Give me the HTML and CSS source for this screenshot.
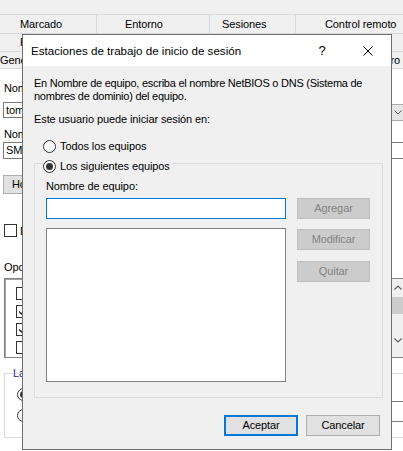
FILE: index.html
```html
<!DOCTYPE html>
<html lang="es">
<head>
<meta charset="utf-8">
<title>Estaciones de trabajo de inicio de sesión</title>
<link rel="stylesheet" href="styles.css">
</head>
<body>
<div class="window">
  <div class="strip"></div>
  <div class="tabrow row1">
    <div class="tab t1">Marcado</div>
    <div class="tab t2">Entorno</div>
    <div class="tab t3">Sesiones</div>
    <div class="tab t4">Control remoto</div>
  </div>
  <div class="tabrow row2">
    <div class="tab r2a">Perfil de Servicios de Escritorio remoto</div>
    <div class="tab r2b">COM+</div>
  </div>
  <div class="tabrow row3">
    <div class="tab r3a">General</div>
    <div class="tab r3b">Miembro de</div>
  </div>
  <div class="page">
    <div class="lbl l1">Nombre de inicio de sesión de usuario:</div>
    <div class="fieldrow f1">
      <div class="textbox tb1">tomas.garcia</div>
      <div class="combo">
        <span class="combo-text">@contoso.local</span>
        <span class="combo-arrow"><svg width="8" height="5" viewBox="0 0 8 5"><path d="M0.5 0.5L4 4L7.5 0.5" fill="none" stroke="#5a5a5a" stroke-width="1"/></svg></span>
      </div>
    </div>
    <div class="lbl l2">Nombre de inicio de sesión de usuario (anterior a Windows 2000):</div>
    <div class="fieldrow f2">
      <div class="textbox tb2">SMB\</div>
      <div class="textbox tb3">tomas.garcia</div>
    </div>
    <div class="btnrow">
      <div class="wbtn">Horario de inicio de sesión...</div>
      <div class="wbtn">Iniciar sesión en...</div>
    </div>
    <div class="chkrow"><span class="chk"></span><span class="chk-label">Desbloquear cuenta</span></div>
    <div class="lbl l3">Opciones de cuenta:</div>
    <div class="optlist">
      <div class="opts">
        <div class="opt"><span class="chk"></span>El usuario debe cambiar la contraseña en el siguiente inicio</div>
        <div class="opt"><span class="chk on"><svg width="9" height="9" viewBox="0 0 9 9"><path d="M1 4.5L3.5 7L8 1.5" fill="none" stroke="#222" stroke-width="1.3"/></svg></span>El usuario no puede cambiar la contraseña</div>
        <div class="opt"><span class="chk on"><svg width="9" height="9" viewBox="0 0 9 9"><path d="M1 4.5L3.5 7L8 1.5" fill="none" stroke="#222" stroke-width="1.3"/></svg></span>La contraseña nunca expira</div>
        <div class="opt"><span class="chk"></span>Almacenar contraseña con cifrado reversible</div>
      </div>
      <div class="scroll">
        <div class="sbtn"><svg width="8" height="5" viewBox="0 0 8 5"><path d="M0.5 4.5L4 1L7.5 4.5" fill="none" stroke="#606060" stroke-width="1.2"/></svg></div>
        <div class="thumb"></div>
        <div class="sfill"></div>
        <div class="sbtn sdown"><svg width="8" height="5" viewBox="0 0 8 5"><path d="M0.5 0.5L4 4L7.5 0.5" fill="none" stroke="#606060" stroke-width="1.2"/></svg></div>
      </div>
    </div>
    <div class="expire">
      <div class="cap">La cuenta expira</div>
      <div class="erow"><span class="radio on"></span>Nunca</div>
      <div class="erow"><span class="radio"></span>Fin de:<div class="date">martes, 12 de marzo de 2024</div></div>
    </div>
  </div>
</div>

<div class="dlg">
  <div class="titlebar">
    <div class="title">Estaciones de trabajo de inicio de sesión</div>
    <div class="tbtn help">?</div>
    <div class="tbtn close"><svg width="10" height="10" viewBox="0 0 10 10"><path d="M0.5 0.5L9.5 9.5M9.5 0.5L0.5 9.5" fill="none" stroke="#000" stroke-width="1"/></svg></div>
  </div>
  <div class="body">
    <p class="intro">En Nombre de equipo, escriba el nombre NetBIOS o DNS (Sistema de<br>nombres de dominio) del equipo.</p>
    <p class="prompt">Este usuario puede iniciar sesión en:</p>
    <div class="radio-row"><span class="radio"></span>Todos los equipos</div>
    <div class="group">
      <div class="legend"><span class="radio on"></span>Los siguientes equipos</div>
      <div class="gbody">
        <div class="gleft">
          <div class="glabel">Nombre de equipo:</div>
          <div class="gin"></div>
          <div class="glist"></div>
        </div>
        <div class="gright">
          <div class="dbtn b1">Agregar</div>
          <div class="dbtn b2">Modificar</div>
          <div class="dbtn b3">Quitar</div>
        </div>
      </div>
    </div>
    <div class="footer">
      <div class="fbtn ok">Aceptar</div>
      <div class="fbtn cancel">Cancelar</div>
    </div>
  </div>
</div>
</body>
</html>
```

FILE: styles.css
```css
* { box-sizing: border-box; }
html, body { margin: 0; padding: 0; }
body {
  width: 403px;
  height: 451px;
  overflow: hidden;
  position: relative;
  background: #f0f0f0;
  font-family: "Liberation Sans", Arial, sans-serif;
  font-size: 11px;
  letter-spacing: -0.1px;
  color: #000;
}

/* background property sheet */
.window { width: 403px; }
.strip { height: 14px; }
.tabrow {
  display: flex;
  border-top: 1px solid #d9d9d9;
  white-space: nowrap;
  overflow: hidden;
}
.row1 { height: 19px; line-height: 18px; }
.row2 { height: 18px; line-height: 17px; }
.row3 { height: 17px; line-height: 16px; }
.tab { flex: none; }
.t1 { width: 97px; padding-left: 20px; border-right: 1px solid #d9d9d9; }
.t2 { width: 113px; padding-left: 28px; border-right: 1px solid #d9d9d9; }
.t3 { width: 86px; padding-left: 12px; border-right: 1px solid #d9d9d9; }
.t4 { flex: 1; padding-left: 29px; }
.r2a { width: 283px; padding-left: 20px; border-right: 1px solid #d9d9d9; }
.r2b { padding-left: 20px; }
.r3a { width: 358px; }
.r3b { padding-left: 0; }

.page {
  width: 407px;
  height: 400px;
  background: #fff;
  border-top: 1px solid #d9d9d9;
  padding-left: 3px;
  white-space: nowrap;
}
.lbl { line-height: 13px; padding-left: 1px; overflow: hidden; }
.l1 { margin-top: 13px; }
.l2 { margin-top: 7px; }
.l3 { margin-top: 24px; }
.fieldrow { display: flex; align-items: flex-start; }
.f1 { margin-top: 7px; }
.f2 { margin-top: 1px; }
.textbox {
  border: 1px solid #7a7a7a;
  background: #fff;
  line-height: 14px;
  padding-left: 2px;
  overflow: hidden;
}
.tb1 { width: 150px; height: 16px; }
.tb2 { width: 150px; height: 17px; line-height: 15px; }
.tb3 { flex: 1; margin-left: 8px; height: 17px; line-height: 15px; }
.combo {
  flex: 1;
  margin-left: 8px;
  margin-top: 2px;
  height: 17px;
  background: #e5e5e5;
  border: 1px solid #acacac;
  display: flex;
  justify-content: space-between;
  line-height: 15px;
}
.combo-text { padding-left: 3px; }
.combo-arrow {
  width: 17px;
  display: flex;
  align-items: center;
  justify-content: center;
}
.btnrow { display: flex; gap: 8px; margin-top: 16px; }
.wbtn {
  height: 19px;
  line-height: 17px;
  background: #e1e1e1;
  border: 1px solid #adadad;
  padding: 0 8px;
}
.chkrow {
  display: flex;
  align-items: center;
  margin-top: 30px;
  height: 13px;
  padding-left: 1px;
}
.chk {
  width: 13px;
  height: 13px;
  border: 1px solid #333;
  background: #fff;
  flex: none;
  display: flex;
  align-items: center;
  justify-content: center;
}
.chk-label { margin-left: 3px; }
.optlist {
  margin-top: 4px;
  margin-left: 1px;
  height: 80px;
  border: 1px solid #828282;
  box-shadow: inset 1px 1px 0 #a0a0a0;
  background: #fff;
  display: flex;
}
.opts { flex: 1; padding: 5px 0 0 11px; overflow: hidden; }
.opt { display: flex; align-items: center; height: 18px; gap: 4px; }
.scroll {
  width: 17px;
  background: #f0f0f0;
  display: flex;
  flex-direction: column;
}
.sbtn { height: 17px; display: flex; align-items: center; justify-content: center; }
.thumb { height: 17px; margin: 1px 0 0 1px; background: #cdcdcd; }
.sfill { flex: 1; }
.sdown { margin-bottom: 8px; }
.expire {
  margin-top: 15px;
  margin-left: 1px;
  height: 65px;
  border: 1px solid #dcdcdc;
}
.cap {
  display: block;
  width: max-content;
  margin: -7px 0 0 8px;
  padding-right: 2px;
  line-height: 13px;
  background: #fff;
  color: #1b2a8c;
}
.erow {
  display: flex;
  align-items: center;
  height: 13px;
  margin-top: 8px;
  padding-left: 12px;
}
.date {
  margin-left: auto;
  width: 220px;
  height: 21px;
  margin-top: -8px;
  border: 1px solid #7a7a7a;
  background: #fff;
  line-height: 19px;
  padding-left: 3px;
}

.radio {
  width: 13px;
  height: 13px;
  border: 1px solid #333;
  border-radius: 50%;
  background: #fff;
  flex: none;
  margin-right: 4px;
  display: flex;
  align-items: center;
  justify-content: center;
}
.radio.on::after {
  content: "";
  width: 7px;
  height: 7px;
  border-radius: 50%;
  background: #333;
}

/* dialog */
.dlg {
  position: absolute;
  left: 22px;
  top: 34px;
  width: 370px;
  height: 416px;
  border: 1px solid #6f6f6f;
  background: #f0f0f0;
  display: flex;
  flex-direction: column;
}
.titlebar {
  height: 31px;
  background: #fff;
  display: flex;
  align-items: center;
  flex: none;
}
.title {
  flex: 1;
  padding-left: 8px;
  white-space: nowrap;
  font-size: 11.6px;
  letter-spacing: 0;
}
.tbtn {
  width: 46px;
  height: 31px;
  display: flex;
  align-items: center;
  justify-content: center;
}
.help { font-size: 13px; letter-spacing: 0; }
.body {
  flex: 1;
  padding: 11px 8px 0 11px;
}
.intro, .prompt { margin: 0; line-height: 13px; white-space: nowrap; }
.intro { letter-spacing: -0.25px; }
.prompt { margin-top: 10px; }
.radio-row {
  display: flex;
  align-items: center;
  height: 16px;
  margin-top: 12px;
  padding-left: 9px;
}
.group {
  margin-top: 9px;
  border: 1px solid #dcdcdc;
  padding: 0 11px 15px 11px;
}
.legend {
  display: flex;
  align-items: center;
  width: max-content;
  height: 16px;
  margin: -6px 0 0 -3px;
  padding-right: 2px;
  background: #f0f0f0;
}
.gbody { display: flex; gap: 11px; margin-top: 6px; }
.gleft { width: 240px; display: flex; flex-direction: column; }
.glabel { line-height: 13px; }
.gin { height: 21px; margin-top: 5px; border: 1px solid #0078d7; background: #fff; }
.glist { height: 154px; margin-top: 9px; border: 1px solid #828282; background: #fff; }
.gright { width: 73px; display: flex; flex-direction: column; padding-top: 18px; }
.dbtn {
  height: 21px;
  background: #cccccc;
  border: 1px solid #bfbfbf;
  color: #838383;
  text-align: center;
  line-height: 19px;
}
.b2 { margin-top: 10px; }
.b3 { margin-top: 11px; }
.footer {
  display: flex;
  justify-content: flex-end;
  gap: 8px;
  margin-top: 17px;
  padding-right: 3px;
}
.fbtn {
  width: 74px;
  height: 21px;
  background: #e1e1e1;
  border: 1px solid #adadad;
  text-align: center;
  line-height: 19px;
}
.ok { border: 2px solid #0078d7; line-height: 17px; }
```
